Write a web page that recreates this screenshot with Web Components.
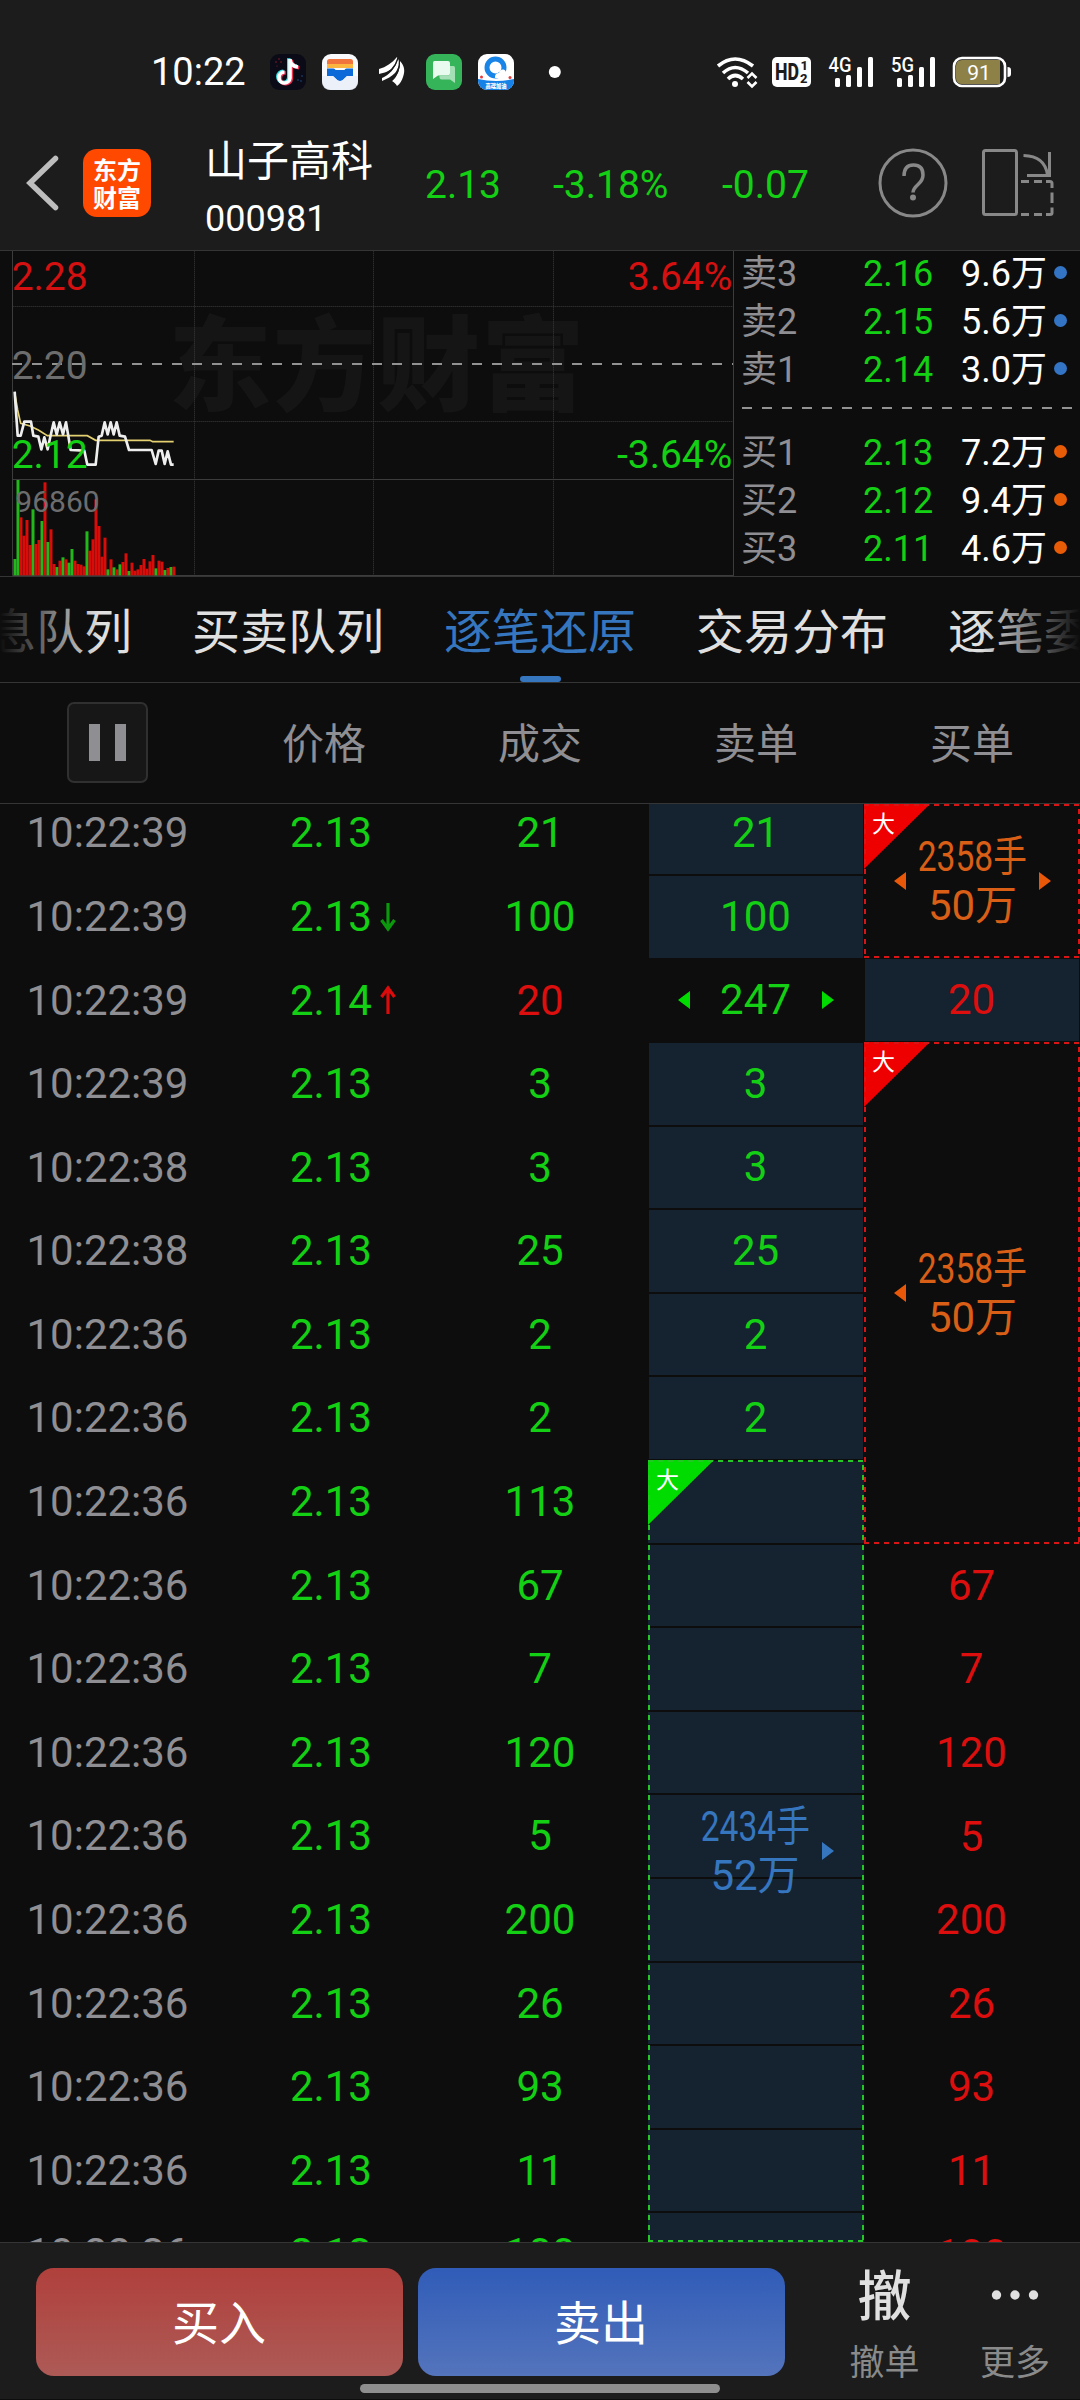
<!DOCTYPE html>
<html lang="zh-CN">
<head>
<meta charset="utf-8">
<meta name="viewport" content="width=1080">
<title>山子高科 000981</title>
<style>
:root{--bg:#0d0d0d;--bar:#1c1c1c;--line:#353535;--g:#14d014;--r:#dc0e0e;--gray:#8e8e93;--navy:#152230;--blue:#3576bf;--orange:#d95e16}
html,body{margin:0;background:var(--bg)}
body{width:1080px;height:2400px;overflow:hidden;font-family:Roboto,"Noto Sans CJK SC",sans-serif;color:#fff}
</style>
</head>
<body>
<trade-app></trade-app>
<script>
const define = (name, html, setup) => {
  const t = document.createElement('template');
  t.innerHTML = html;
  customElements.define(name, class extends HTMLElement {
    constructor() {
      super();
      this.attachShadow({ mode: 'open' }).append(t.content.cloneNode(true));
    }
    connectedCallback() { if (setup && !this.ready) { this.ready = true; setup(this, this.shadowRoot); } }
  });
};

define('status-bar', `<style>
:host{display:flex;align-items:center;height:45px;padding:49px 68px 0 151px}
time{font-size:38px;line-height:45px;width:119px;padding-top:1px}
.apps{display:flex;gap:16px;align-items:center;flex:1}
svg{display:block;flex:none;overflow:visible}
.sys{display:flex;align-items:center}
</style>
<time>10:22</time>
<div class="apps">
<svg width="36" height="36" viewBox="0 0 36 36"><rect width="36" height="36" rx="9" fill="#0b0b17"/><g fill="none" stroke-width="3.600"><path d="M20 5v19a5.500 5.500 0 1 1-5.500-6M20 5.500c.5 5 4 7 8 7.500" stroke="#35dfe4" transform="translate(-1.200 -.7)"/><path d="M20 5v19a5.500 5.500 0 1 1-5.500-6M20 5.500c.5 5 4 7 8 7.500" stroke="#ee2d52" transform="translate(1.300 .8)"/><path d="M20 5v19a5.500 5.500 0 1 1-5.500-6M20 5.500c.5 5 4 7 8 7.500" stroke="#fff"/></g><g fill="#8e1c2c"><circle cx="6" cy="8" r=".8"/><circle cx="9" cy="5" r=".8"/><circle cx="11" cy="8" r=".8"/><circle cx="7" cy="12" r=".6"/></g><g fill="#1c4f8c"><circle cx="28" cy="26" r=".8"/><circle cx="32" cy="22" r=".8"/><circle cx="31" cy="27" r=".8"/></g></svg>
<svg width="36" height="36" viewBox="0 0 36 36"><rect width="36" height="36" rx="9" fill="#f7f9fc"/><path d="M5 10V7.500Q5 5 7.500 5h21Q31 5 31 7.500V10z" fill="#f0743c"/><path d="M5 10h26v4H5z" fill="#fcb53e"/><path d="M5 14.500h6.500q1.500 0 2 1.500h9q.5-1.500 2-1.500H31V22h-6l-4.500 4.200q-2.500 1.600-5 0L11 22H5z" fill="#0b6ad8"/><path d="M0 22h11l4.500 4.200q2.500 1.600 5 0L25 22h11v5q0 9-9 9H9q-9 0-9-9z" fill="#e9eff7" opacity=".8"/></svg>
<svg width="36" height="36" viewBox="0 0 36 36" fill="#fff"><path d="M5 15C12 13 18 9 23 3c1 2-1 7-4 10-3 4-9 6-14 7z"/><path d="M8 24c7-3 13-9 16-19 3 4 0 10-3 14-3 3-8 6-13 8z"/><path d="M18 27c6-5 8-12 8-20 5 5 5 11 3 16-1 3-3 7-6 9-1-2-3-4-5-5z"/><path d="M7 22c7-2 14-8 17-18M16 28c7-6 10-12 9.500-22" fill="none" stroke="#1c1c1c" stroke-width="1.300"/></svg>
<svg width="36" height="36" viewBox="0 0 36 36"><rect width="36" height="36" rx="9" fill="#35b45a"/><path d="M8.500 7H22q2 0 2 2v10.500q0 2-2 2H12l-5 3.500V9q0-2 1.500-2z" fill="#e9faee"/><path d="M24 12h3.500q1.500 0 1.500 2v15l-5-3.500H15.500q-2 0-2-2V21.500H22q2 0 2-2z" fill="#a5dfb5"/></svg>
<svg width="36" height="36" viewBox="0 0 36 36"><defs><clipPath id="q"><rect width="36" height="36" rx="9"/></clipPath></defs><g clip-path="url(#q)"><path fill="#fff" d="M0 0h36v36H0z"/><circle cx="17.500" cy="13.500" r="8.500" fill="none" stroke="#1884e8" stroke-width="5"/><path d="M17 23q0-4 4-4 1-4 4.500-3.500Q28 16 28 19q4 1 3 5H17z" fill="#fff"/><path d="M0 25q18 4 36 0v11H0z" fill="#1681e6"/><circle cx="3.500" cy="23" r="1.500" fill="#e43a3a"/><circle cx="32" cy="23.500" r="1.500" fill="#e43a3a"/><text x="18" y="33.500" font-size="6" font-weight="900" text-anchor="middle" fill="#fff" font-family="Noto Sans CJK SC,sans-serif" textLength="21" lengthAdjust="spacingAndGlyphs">高端加油</text></g></svg>
<svg width="60" height="12" viewBox="0 0 60 12"><circle cx="24.800" cy="6" r="6" fill="#fff"/></svg>
</div>
<svg class="sys" width="296" height="32" viewBox="716 56 296 32" fill="#fff">
<g fill="none" stroke="#fff" stroke-width="3.600"><path d="M718 66q17-14 35 0"/><path d="M723 73q12-11 25 0"/><path d="M728 79q7-7 15 0"/></g><circle cx="735" cy="84" r="3"/><path d="M747.500 78l4.500-4.500 4.500 4.500M747.500 82l4.500 4.500 4.500-4.500" fill="none" stroke="#fff" stroke-width="2.600"/>
<rect x="772" y="57" width="39" height="30" rx="5"/>
<g font-family="Roboto,sans-serif" fill="#1c1c1c" font-weight="800"><text x="775" y="80" font-size="23" textLength="24" lengthAdjust="spacingAndGlyphs">HD</text><text x="800.500" y="70" font-size="13">1</text><text x="800" y="83" font-size="13">2</text></g>
<g font-family="Roboto,sans-serif" font-size="20.500" font-weight="500"><text x="828.500" y="72" textLength="23" lengthAdjust="spacingAndGlyphs">4G</text><text x="891" y="72" textLength="23" lengthAdjust="spacingAndGlyphs">5G</text></g>
<g><rect x="835" y="78" width="5" height="9" rx="1.500"/><rect x="846" y="75" width="5" height="12" rx="1.500"/><rect x="857" y="67" width="5" height="20" rx="1.500"/><rect x="868" y="57" width="5" height="30" rx="1.500"/></g>
<g><rect x="897" y="78" width="5" height="9" rx="1.500"/><rect x="908" y="75" width="5" height="12" rx="1.500"/><rect x="919" y="67" width="5" height="20" rx="1.500"/><rect x="930" y="57" width="5" height="30" rx="1.500"/></g>
<rect x="954" y="58" width="51" height="28" rx="8" fill="none" stroke="#fff" stroke-width="2.600"/><path d="M962 60h38v24h-38q-6 0-6-6V66q0-6 6-6z" fill="#8d8148"/><path d="M1007.500 67q3.500 0 3.500 3v4q0 3-3.500 3z"/><text x="979" y="79.500" font-size="21" text-anchor="middle" font-family="Roboto,sans-serif">91</text>
</svg>`);

define('app-header', `<style>
:host{display:flex;height:156px;align-items:center;box-sizing:border-box;padding:21px 26px 0 26px}
svg{display:block;flex:none}
.logo{width:68px;height:68px;border-radius:14px;background:#ff4800;margin-left:23px;display:flex;flex-direction:column;justify-content:center;font:700 24px/28px "Noto Sans CJK SC",sans-serif;text-align:center}
.name{margin-left:54px;padding-top:16px;width:220px;display:flex;flex-direction:column;font-size:42px;line-height:57px}
.name small{font-size:36px;line-height:59px}
.q{color:var(--g);font-size:39px;line-height:46px;padding-top:4px}
.help{margin-left:auto}
.turn{margin-left:32px}
</style>
<svg width="34" height="60" viewBox="0 0 34 60"><path d="M29.500 5.500L4 30l25.500 24.500" fill="none" stroke="#bdbdbd" stroke-width="5.500" stroke-linecap="round"/></svg>
<div class="logo"><span>东方</span><span>财富</span></div>
<div class="name"><span>山子高科</span><small>000981</small></div>
<span class="q" style="width:128px">2.13</span><span class="q" style="width:169px">-3.18%</span><span class="q">-0.07</span>
<svg class="help" width="70" height="70" viewBox="0 0 70 70" fill="none" stroke="#888" stroke-width="3"><circle cx="35" cy="35" r="33"/><path d="M26 28q0-11 9.500-11T45 27q0 5-5 9.500t-5 8" stroke-width="3.500"/><circle cx="35" cy="49.500" r="3" fill="#888" stroke="none"/></svg>
<svg class="turn" width="74" height="70" viewBox="0 0 74 70" fill="none" stroke="#888" stroke-width="3"><rect x="3.500" y="2.500" width="33" height="64" rx="2"/><path d="M43.500 7.500Q65 8 67.500 27M69.500 4v23.500H47M41 33.500h8M54 33.500h8M66 33.500h4q2 0 2 2V40M72 44.500V55M72 59.500V65q0 1.500-2 1.500h-4M62 66.500h-8M49 66.500h-8"/></svg>`);

define('mini-chart', `<style>:host{display:block;width:734px;height:326px}svg{display:block}text{font-family:Roboto,sans-serif;font-size:117px}</style>
<svg width="734" height="326" viewBox="0 30 2202 978">
<g font-weight="900" id="wm"></g>
<g stroke="#3c3c3c" stroke-width="3" stroke-dasharray="3 3"><path d="M38 199.500H2200M38 544.500H2200M583.500 34V1006M1120.500 34V1006M1660.500 34V1006"/></g>
<path d="M37.500 32V1006.500H2200M38 718.500H2200M2200.500 32V1008" stroke="#3c3c3c" stroke-width="3" fill="none"/>
<path d="M36 372H2199" stroke="#929292" stroke-width="6" stroke-dasharray="30 30"/>
<g id="bars"></g>
<g fill="none"><path d="M44 458L53 510 62 550 90 558 115 570 142 587H262L287 601H450L458 605H521" stroke="#e3d070" stroke-width="5"/>
<path d="M44 455L47 500 53 587H62L73 545H93L100 587 115 590 124 628 133 592 143 628 151 590 161 547 170 583 179 547 189 583 198 547 212 630 253 632 262 674H287L296 590 305 587 314 547 323 583 332 547 341 583 350 547 359 587 375 590 387 630H455L467 672 476 632H485L494 672 503 634 513 674H521" stroke="#eee" stroke-width="8" stroke-linejoin="round"/></g>
<text x="35" y="150" fill="#d41010">2.28</text><text x="35" y="416" fill="#6d6d6d">2.20</text><text x="35" y="684" fill="#14d014">2.12</text>
<text x="2197" y="150" fill="#d41010" text-anchor="end">3.64%</text><text x="2197" y="684" fill="#14d014" text-anchor="end">-3.64%</text>
<text x="46" y="815" fill="#6d6d6d" style="font-size:90px">96860</text>
</svg>`, (el, root) => {
  const tops = 'g957 g720 r832 r887 r840 r915 g808 r912 r900 g843 r727 g906 r868 r972 g981 r962 g952 r958 g968 g927 r962 r972 r974 r979 g874 r932 r898 r778 r858 r950 r893 g988 r958 g982 r988 g973 r966 r940 g993 r968 r992 r988 r975 r957 r986 r964 r945 g985 r962 r965 g990 r984 g981 r980'.split(' ');
  root.getElementById('bars').innerHTML = tops.map((b, i) => {
    const y = +b.slice(1);
    return `<rect x="${40.5 + i * 9}" y="${y}" width="9" height="${1006 - y}" fill="${b[0] === 'g' ? '#22b81c' : '#d80c08'}"/>`;
  }).join('');
  root.getElementById('wm').innerHTML = [...'东方财富'].map((c, i) =>
    `<text x="${505 + i * 313}" y="488" fill="#151515" style="font:900 310px 'Noto Sans CJK SC',sans-serif">${c}</text>`).join('');
});

define('book-row', `<style>
:host{display:flex;height:48px;line-height:48px;font-size:36px;align-items:center}
.l{color:var(--gray);width:122px}.p{color:var(--g);width:98px}.v{width:93px}
i{width:13px;height:13px;border-radius:50%;background:var(--dot);margin-top:-4px}
</style><span class="l"><slot name="l"></slot></span><span class="p"><slot name="p"></slot></span><span class="v"><slot></slot></span><i></i>`);

define('order-book', `<style>
:host{display:block;width:338px;height:326px;padding-left:7px;box-sizing:border-box;overflow:hidden}
section{display:block}
.sell{--dot:#3474c4;margin-top:0}.buy{--dot:#e85c08;padding-top:20px}
hr{border:0;margin:13px 0 0 1px;height:2px;width:330px;background:repeating-linear-gradient(90deg,#929292 0 10px,transparent 10px 20px)}
</style><section class="sell"></section><hr><section class="buy"></section>`, (el, root) => {
  const rows = a => a.map(([l, p, v]) => `<book-row><span slot="l">${l}</span><span slot="p">${p}</span>${v}</book-row>`).join('');
  root.querySelector('.sell').innerHTML = rows([['卖3', '2.16', '9.6万'], ['卖2', '2.15', '5.6万'], ['卖1', '2.14', '3.0万']]);
  root.querySelector('.buy').innerHTML = rows([['买1', '2.13', '7.2万'], ['买2', '2.12', '9.4万'], ['买3', '2.11', '4.6万']]);
});

define('tab-strip', `<style>
:host{display:block;position:relative;height:105px;border-bottom:1px solid var(--line);overflow:hidden}
nav{display:flex;gap:60px;margin-left:-60px;font-size:48px;line-height:112px;color:#e0e0e0;white-space:nowrap;width:max-content}
.on{color:var(--blue);position:relative}
.on::after{content:"";position:absolute;left:50%;margin-left:-20.500px;top:99px;width:41px;height:6px;border-radius:3px;background:var(--blue)}
:host::before,:host::after{content:"";position:absolute;top:0;bottom:0;width:100px;z-index:1}
:host::before{left:0;background:linear-gradient(90deg,#0d0d0d,#0d0d0d00)}
:host::after{right:0;background:linear-gradient(270deg,#0d0d0d,#0d0d0d00)}
</style><nav><span>消息队列</span><span>买卖队列</span><span class="on">逐笔还原</span><span>交易分布</span><span>逐笔委托</span></nav>`);

define('table-head', `<style>
:host{display:grid;grid-template-columns:repeat(5,216px);height:120px;border-bottom:1px solid var(--line);align-items:center;justify-items:center;align-content:center;grid-template-rows:120px;color:var(--gray);font-size:42px;line-height:120px}
span{padding-top:3px}
.pause{width:77px;height:77px;border:2px solid #303030;border-radius:7px;background:#171717;display:flex;gap:15px;align-items:center;justify-content:center;margin:-2px 1px 0 0}
i{width:11px;height:37px;background:var(--gray)}
</style><div class="pause"><i></i><i></i></div><span>价格</span><span>成交</span><span>卖单</span><span>买单</span>`);

define('tick-row', `<style>
:host{display:flex;height:83.600px;line-height:83.600px;font-size:42px}
.t{width:290px;box-sizing:border-box;color:var(--gray);padding-left:26.500px}
.p{width:142px;color:var(--g);display:flex;align-items:center}
.v{width:216px;text-align:center;color:var(--g)}
:host([up]) .v{color:var(--r)}
svg{display:none;margin-left:7px}
:host([up]) svg,:host([down]) svg{display:block}
:host([down]) svg{transform:rotate(180deg);color:#0c980c}
:host([up]) svg{color:#dc0b0b}
</style><span class="t"><slot name="t"></slot></span><span class="p"><slot name="p"></slot><svg width="18" height="30" viewBox="0 0 18 30"><path d="M9 2v27M2.500 12L9 3l6.500 9" fill="none" stroke="currentColor" stroke-width="3.200"/></svg></span><span class="v"><slot></slot></span>`);

define('order-cell', `<style>
:host{display:flex;box-sizing:border-box;height:83.600px;width:214px;align-items:center;justify-content:center;font-size:42px;line-height:80px;color:var(--g);border:solid var(--bg);border-width:1px 0}
:host([fill]){background:var(--navy)}
:host([red]){color:var(--r)}
span{margin-left:-1px}
b{display:none;border:solid transparent;border-width:9px 0}
:host([tri]) b{display:block}
:host([tri]){justify-content:space-between;padding:0 29px}
.l{border-right:12px solid #00dc00}.r{border-left:12px solid #00dc00}
</style><b class="l"></b><span><slot></slot></span><b class="r"></b>`);

define('big-order', `<style>
:host{display:flex;position:relative;box-sizing:border-box;align-items:center;justify-content:space-between;padding:0 29px 0 30px;color:var(--c);font-size:42px;line-height:49px;text-align:center;--d:#d81414}
:host([sell]){--d:#24c824;padding:0 30px 0 28px}
.grid{position:absolute;inset:0;display:none;flex-direction:column}
:host([sell]) .grid{display:flex}
.grid i{display:block;height:83.600px;flex:none;box-sizing:border-box;background:var(--navy);border:solid var(--bg);border-width:1px 0}
.frame{position:absolute;inset:0;
background:repeating-linear-gradient(90deg,var(--d) 0 5px,transparent 5px 10px) 0 0/100% 2px no-repeat,
repeating-linear-gradient(90deg,var(--d) 0 5px,transparent 5px 10px) 0 100%/100% 2px no-repeat,
repeating-linear-gradient(180deg,transparent 0 5px,var(--d) 5px 10px) 0 0/2px 100% no-repeat,
repeating-linear-gradient(180deg,transparent 0 5px,var(--d) 5px 10px) 100% 0/2px 100% no-repeat}
.tag{position:absolute;left:0;top:0;width:66px;height:65px;background:var(--f);clip-path:polygon(0 0,100% 0,0 100%);color:#fff;font-size:23px;line-height:41px;text-align:left;text-indent:8px}
.txt{position:relative;margin:0 -20px;display:flex;flex-direction:column;align-items:center}
.n{transform:scaleX(.8);white-space:nowrap}
b{border:solid transparent;border-width:9px 0;position:relative}
.l{border-right:12px solid var(--a)}.r{border-left:12px solid var(--a)}
:host([nor]) .r,:host([nol]) .l{visibility:hidden}
</style><div class="grid"><i></i><i></i><i></i><i></i><i></i><i></i><i></i><i></i><i></i><i></i></div><div class="tag">大</div><div class="frame"></div><b class="l"></b><div class="txt"><span class="n"><slot name="n"></slot></span><span><slot></slot></span></div><b class="r"></b>`);

define('tick-table', `<style>
:host{display:block;height:1438px;overflow:hidden}
.wrap{display:flex}
.rows{width:648px;margin-top:-12.700px}
.sell{width:216px;margin-top:-12.700px;padding-left:1px;box-sizing:border-box}
.sell big-order{margin-left:-1px}
.buy{width:216px;display:flex;flex-direction:column;align-items:flex-end}
.buy order-cell{margin-right:1px}
</style><div class="wrap"><div class="rows"></div><div class="sell"></div><div class="buy"></div></div>`, (el, root) => {
  const ticks = [['39', 21], ['39', 100, 'down'], ['39', 20, 'up'], ['39', 3], ['38', 3], ['38', 25], ['36', 2], ['36', 2], ['36', 113], ['36', 67], ['36', 7], ['36', 120], ['36', 5], ['36', 200], ['36', 26], ['36', 93], ['36', 11], ['36', 100]];
  root.querySelector('.rows').innerHTML = ticks.map(([s, v, d = '']) =>
    `<tick-row ${d}><span slot="t">10:22:${s}</span><span slot="p">${d === 'up' ? '2.14' : '2.13'}</span>${v}</tick-row>`).join('');
  root.querySelector('.sell').innerHTML = [21, 100, 247, 3, 3, 25, 2, 2].map(v =>
    `<order-cell ${v === 247 ? 'tri' : 'fill'}>${v}</order-cell>`).join('') +
    `<big-order sell nol style="height:782px;width:216px;--f:#00dc00;--c:#3576bf;--a:#3576bf;overflow:hidden"><span slot="n">2434手</span>52万</big-order>`;
  const red = '--f:#ee0000;--c:#d95e16;--a:#e85808';
  root.querySelector('.buy').innerHTML =
    `<big-order style="height:154px;width:216px;${red}"><span slot="n">2358手</span>50万</big-order>
     <order-cell fill red style="height:84px">20</order-cell>
     <big-order nor style="height:502px;width:216px;${red}"><span slot="n">2358手</span>50万</big-order>` +
    [67, 7, 120, 5, 200, 26, 93, 11, 100].map(v => `<order-cell red>${v}</order-cell>`).join('');
});

define('trade-bar', `<style>
:host{display:block;height:157px;background:var(--bar);border-top:1px solid var(--line);box-sizing:border-box}
.row{display:flex;padding:25px 0 0 36px;height:108px}
button{all:unset;width:367px;height:108px;border-radius:18px;text-align:center;font-size:47px;line-height:111px;margin-right:15px;text-indent:-1px}
.b{background:linear-gradient(#b0403c,#ad5a56)}.s{background:linear-gradient(#305cb8,#5474bc)}
.act{display:flex;flex-direction:column;align-items:center;color:#8a8a8a;font-size:35px;width:130px}
.act b{height:67px;flex:none;font:500 54px/50px "Noto Sans CJK SC",sans-serif;color:#e0e0e0}
.act span{line-height:54px;margin-top:2px}
.home{width:360px;height:9px;border-radius:5px;background:#8e8e8e;margin:8px auto 0}
svg{display:block;padding-top:22px}
</style><div class="row"><button class="b">买入</button><button class="s">卖出</button><div class="act" style="width:169px"><b>撤</b><span>撤单</span></div><div class="act" style="margin-left:-19px"><b><svg width="50" height="10" fill="#e0e0e0"><circle cx="6.500" cy="5" r="4.700"/><circle cx="25" cy="5" r="4.700"/><circle cx="43.500" cy="5" r="4.700"/></svg></b><span>更多</span></div></div><div class="home"></div>`);

define('trade-app', `<style>
:host{display:flex;flex-direction:column;width:1080px;height:2400px;background:var(--bg)}
.top{background:var(--bar);height:250px;border-bottom:1px solid var(--line)}
.mid{display:flex;height:326px;border-bottom:1px solid var(--line);margin-top:-1px;overflow:hidden}
</style><div class="top"><status-bar></status-bar><app-header></app-header></div>
<div class="mid"><mini-chart></mini-chart><order-book></order-book></div>
<tab-strip></tab-strip><table-head></table-head><tick-table></tick-table><trade-bar></trade-bar>`);
</script>
</body>
</html>
